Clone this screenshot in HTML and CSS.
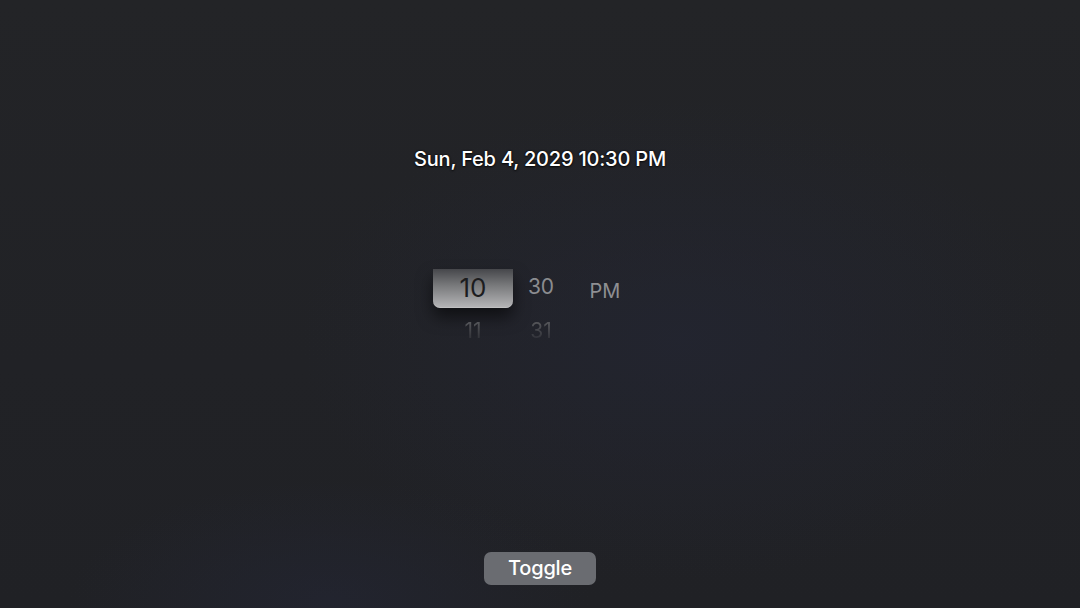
FILE: index.html
```html
<!DOCTYPE html>
<html lang="en">
<head>
<meta charset="utf-8">
<title>Date Picker</title>
<link rel="stylesheet" href="styles.css">
</head>
<body>
<main class="screen">
  <h1 class="title">Sun, Feb 4, 2029 10:30 PM</h1>
  <div class="picker">
    <div class="col col-hour">
      <div class="item selected">10</div>
      <div class="item faded">11</div>
    </div>
    <div class="col col-min">
      <div class="item">30</div>
      <div class="item faded">31</div>
    </div>
    <div class="col col-ampm">
      <div class="item ampm">PM</div>
    </div>
  </div>
  <div class="spacer"></div>
  <button class="toggle">Toggle</button>
</main>
</body>
</html>
```
FILE: styles.css
```css
* { box-sizing: border-box; }
html, body {
  margin: 0;
  padding: 0;
  width: 1080px;
  height: 608px;
  overflow: hidden;
}
body {
  font-family: Inter, "Noto Sans", "Liberation Sans", sans-serif;
  background-color: #212226;
  background-image:
    radial-gradient(ellipse 380px 240px at 680px 340px, rgba(36, 39, 56, 0.5), rgba(36, 39, 56, 0) 100%),
    radial-gradient(ellipse 260px 120px at 330px 600px, rgba(36, 39, 56, 0.5), rgba(36, 39, 56, 0) 100%),
    linear-gradient(180deg, #232427 0%, #212226 60%, #202125 100%);
}
.screen {
  height: 608px;
  display: flex;
  flex-direction: column;
  align-items: center;
  padding-top: 146px;
  padding-bottom: 23px;
}
.title {
  margin: 0;
  font-size: 20px;
  font-weight: 500;
  letter-spacing: -0.2px;
  color: #ffffff;
  line-height: 26px;
  text-shadow: 0 0 2px rgba(0, 0, 0, 0.9), 0 1px 2px rgba(0, 0, 0, 0.7);
}
.picker {
  margin-top: 96px;
  display: flex;
  align-items: flex-start;
  padding-right: 6px;
  height: 80px;
}
.col {
  display: flex;
  flex-direction: column;
  align-items: center;
  height: 80px;
}
.col-hour { width: 80px; }
.col-min { width: 56px; }
.col-ampm { width: 72px; padding-top: 4px; }
.item {
  height: 42px;
  line-height: 38px;
  font-size: 21px;
  color: #8b8c90;
  text-align: center;
  width: 100%;
}
.item.selected {
  height: 42px;
  margin-top: 1px;
  line-height: 38px;
  font-size: 26px;
  color: #1c1c1e;
  border-radius: 0 0 7px 7px;
  background: linear-gradient(180deg, #46474b 0%, #767779 40%, #b6b6b8 100%);
  box-shadow: 0 9px 16px rgba(0, 0, 0, 0.55), inset 0 -1px 0 rgba(255,255,255,0.15);
}
.item.faded {
  height: 40px;
  line-height: 45px;
  color: #56575b;
  -webkit-mask-image: linear-gradient(180deg, #000 35%, rgba(0,0,0,0.15) 85%);
  mask-image: linear-gradient(180deg, #000 35%, rgba(0,0,0,0.15) 85%);
}
.item.ampm {
  color: #8e8f93;
  font-size: 20px;
}
.spacer { flex: 1; }
.toggle {
  width: 112px;
  height: 33px;
  border: none;
  border-radius: 7px;
  background: #6a6c71;
  color: #ffffff;
  font-family: inherit;
  font-size: 20px;
  font-weight: 500;
  letter-spacing: -0.2px;
  padding: 0;
  line-height: 33px;
}
```
